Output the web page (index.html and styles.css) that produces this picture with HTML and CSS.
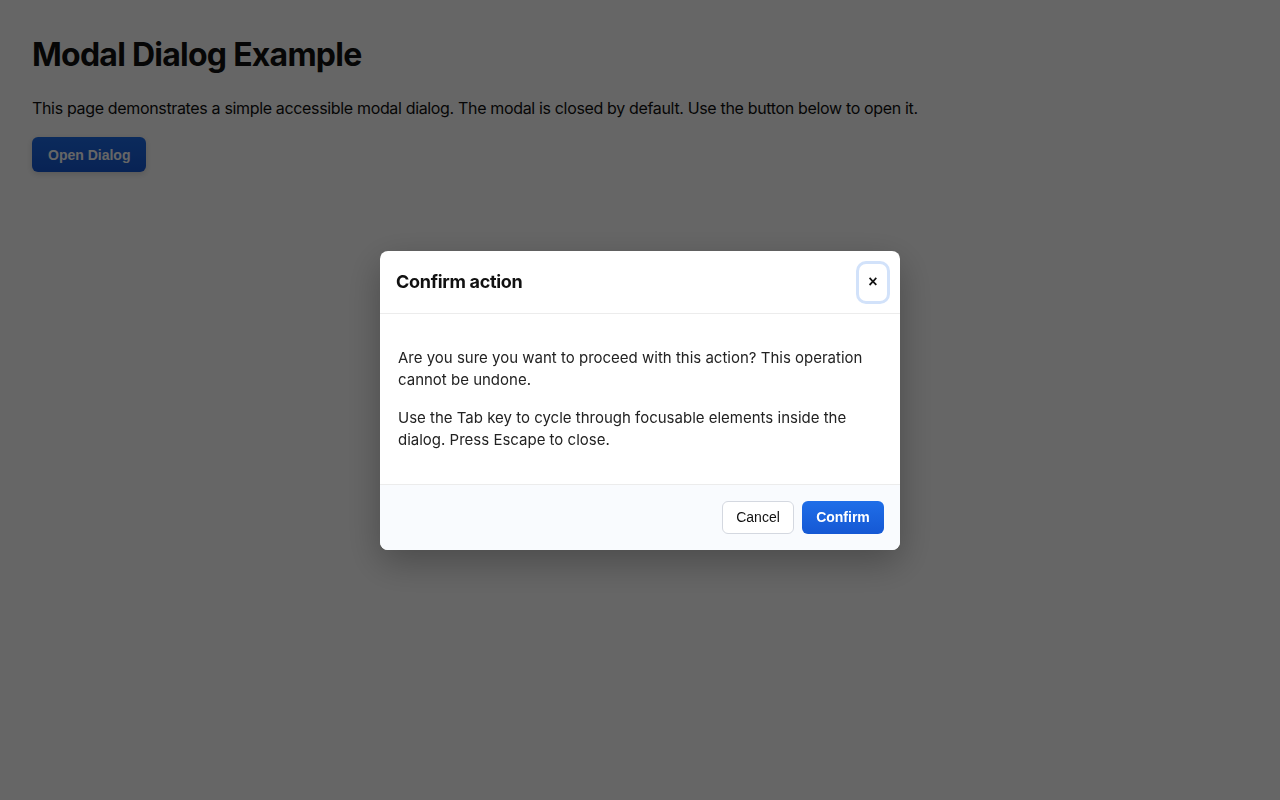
FILE: index.html
```html
<!DOCTYPE html>
<html lang="en">
<head>
<meta charset="utf-8">
<title>Modal Dialog Example</title>
<link rel="stylesheet" href="styles.css">
</head>
<body>
<main class="page">
  <h1 class="page-title">Modal Dialog Example</h1>
  <p class="page-text">This page demonstrates a simple accessible modal dialog. The modal is closed by default. Use the button below to open it.</p>
  <button class="open-btn" type="button">Open Dialog</button>
</main>
<div class="overlay">
  <div class="dialog" role="dialog" aria-modal="true" aria-labelledby="dlg-title">
    <header class="dialog-header">
      <h2 class="dialog-title" id="dlg-title">Confirm action</h2>
      <button class="close-btn" type="button" aria-label="Close">×</button>
    </header>
    <div class="dialog-body">
      <p>Are you sure you want to proceed with this action? This operation cannot be undone.</p>
      <p>Use the Tab key to cycle through focusable elements inside the dialog. Press Escape to close.</p>
    </div>
    <footer class="dialog-footer">
      <button class="btn btn-cancel" type="button">Cancel</button>
      <button class="btn btn-confirm" type="button">Confirm</button>
    </footer>
  </div>
</div>
</body>
</html>
```
FILE: styles.css
```css
html, body {
  margin: 0;
  padding: 0;
  background: #ffffff;
}
body {
  font-family: Inter, "Noto Sans", sans-serif;
  color: #111111;
}
.page {
  padding: 36px 32px;
}
.page-title {
  margin: 0 0 22px;
  font-size: 32px;
  line-height: 38px;
  font-weight: 700;
  letter-spacing: -0.75px;
}
.page-text {
  margin: 0 0 17px;
  font-size: 16px;
  line-height: 24px;
  letter-spacing: -0.34px;
}
.open-btn {
  font-family: "Liberation Sans", Arial, sans-serif;
  font-size: 14px;
  font-weight: 700;
  color: #ffffff;
  background: linear-gradient(#1d6be6, #1557d2);
  border: none;
  border-radius: 6px;
  height: 35px;
  padding: 0 16px;
  box-shadow: 0 2px 6px rgba(0,0,0,0.15);
}
.overlay {
  position: fixed;
  inset: 0;
  background: rgba(0,0,0,0.6);
  display: flex;
  align-items: center;
  justify-content: center;
}
.dialog {
  width: 520px;
  background: #ffffff;
  border-radius: 8px;
  overflow: hidden;
  box-shadow: 0 12px 36px rgba(0,0,0,0.28);
}
.dialog-header {
  height: 63px;
  box-sizing: border-box;
  display: flex;
  align-items: center;
  justify-content: space-between;
  padding: 0 13px 0 16px;
  border-bottom: 1px solid #ececec;
}
.dialog-title {
  margin: 0;
  font-size: 18px;
  font-weight: 700;
  color: #111111;
  letter-spacing: -0.3px;
}
.close-btn {
  width: 28px;
  height: 37px;
  padding: 0;
  border: 1px solid transparent;
  border-radius: 7px;
  background: #ffffff;
  box-shadow: 0 0 0 3px #d2e2fa;
  font-family: "Liberation Sans", Arial, sans-serif;
  font-size: 16px;
  font-weight: 700;
  line-height: 1;
  color: #111111;
  margin-top: 1px;
}
.dialog-body {
  padding: 33px 18px 17px;
  font-size: 15px;
  line-height: 22.5px;
  color: #222222;
}
.dialog-body p {
  margin: 0 0 15px;
}
.dialog-footer {
  display: flex;
  justify-content: flex-end;
  gap: 8px;
  padding: 16px 16px;
  background: #f9fbfe;
  border-top: 1px solid #ececec;
}
.btn {
  font-family: "Liberation Sans", Arial, sans-serif;
  font-size: 14px;
  height: 33px;
  border-radius: 6px;
  box-sizing: border-box;
}
.btn-cancel {
  width: 72px;
  background: #ffffff;
  color: #111111;
  border: 1px solid #d4d8e0;
}
.btn-confirm {
  width: 82px;
  background: linear-gradient(#1f6ee8, #1558d4);
  color: #ffffff;
  font-weight: 700;
  border: none;
}
```
